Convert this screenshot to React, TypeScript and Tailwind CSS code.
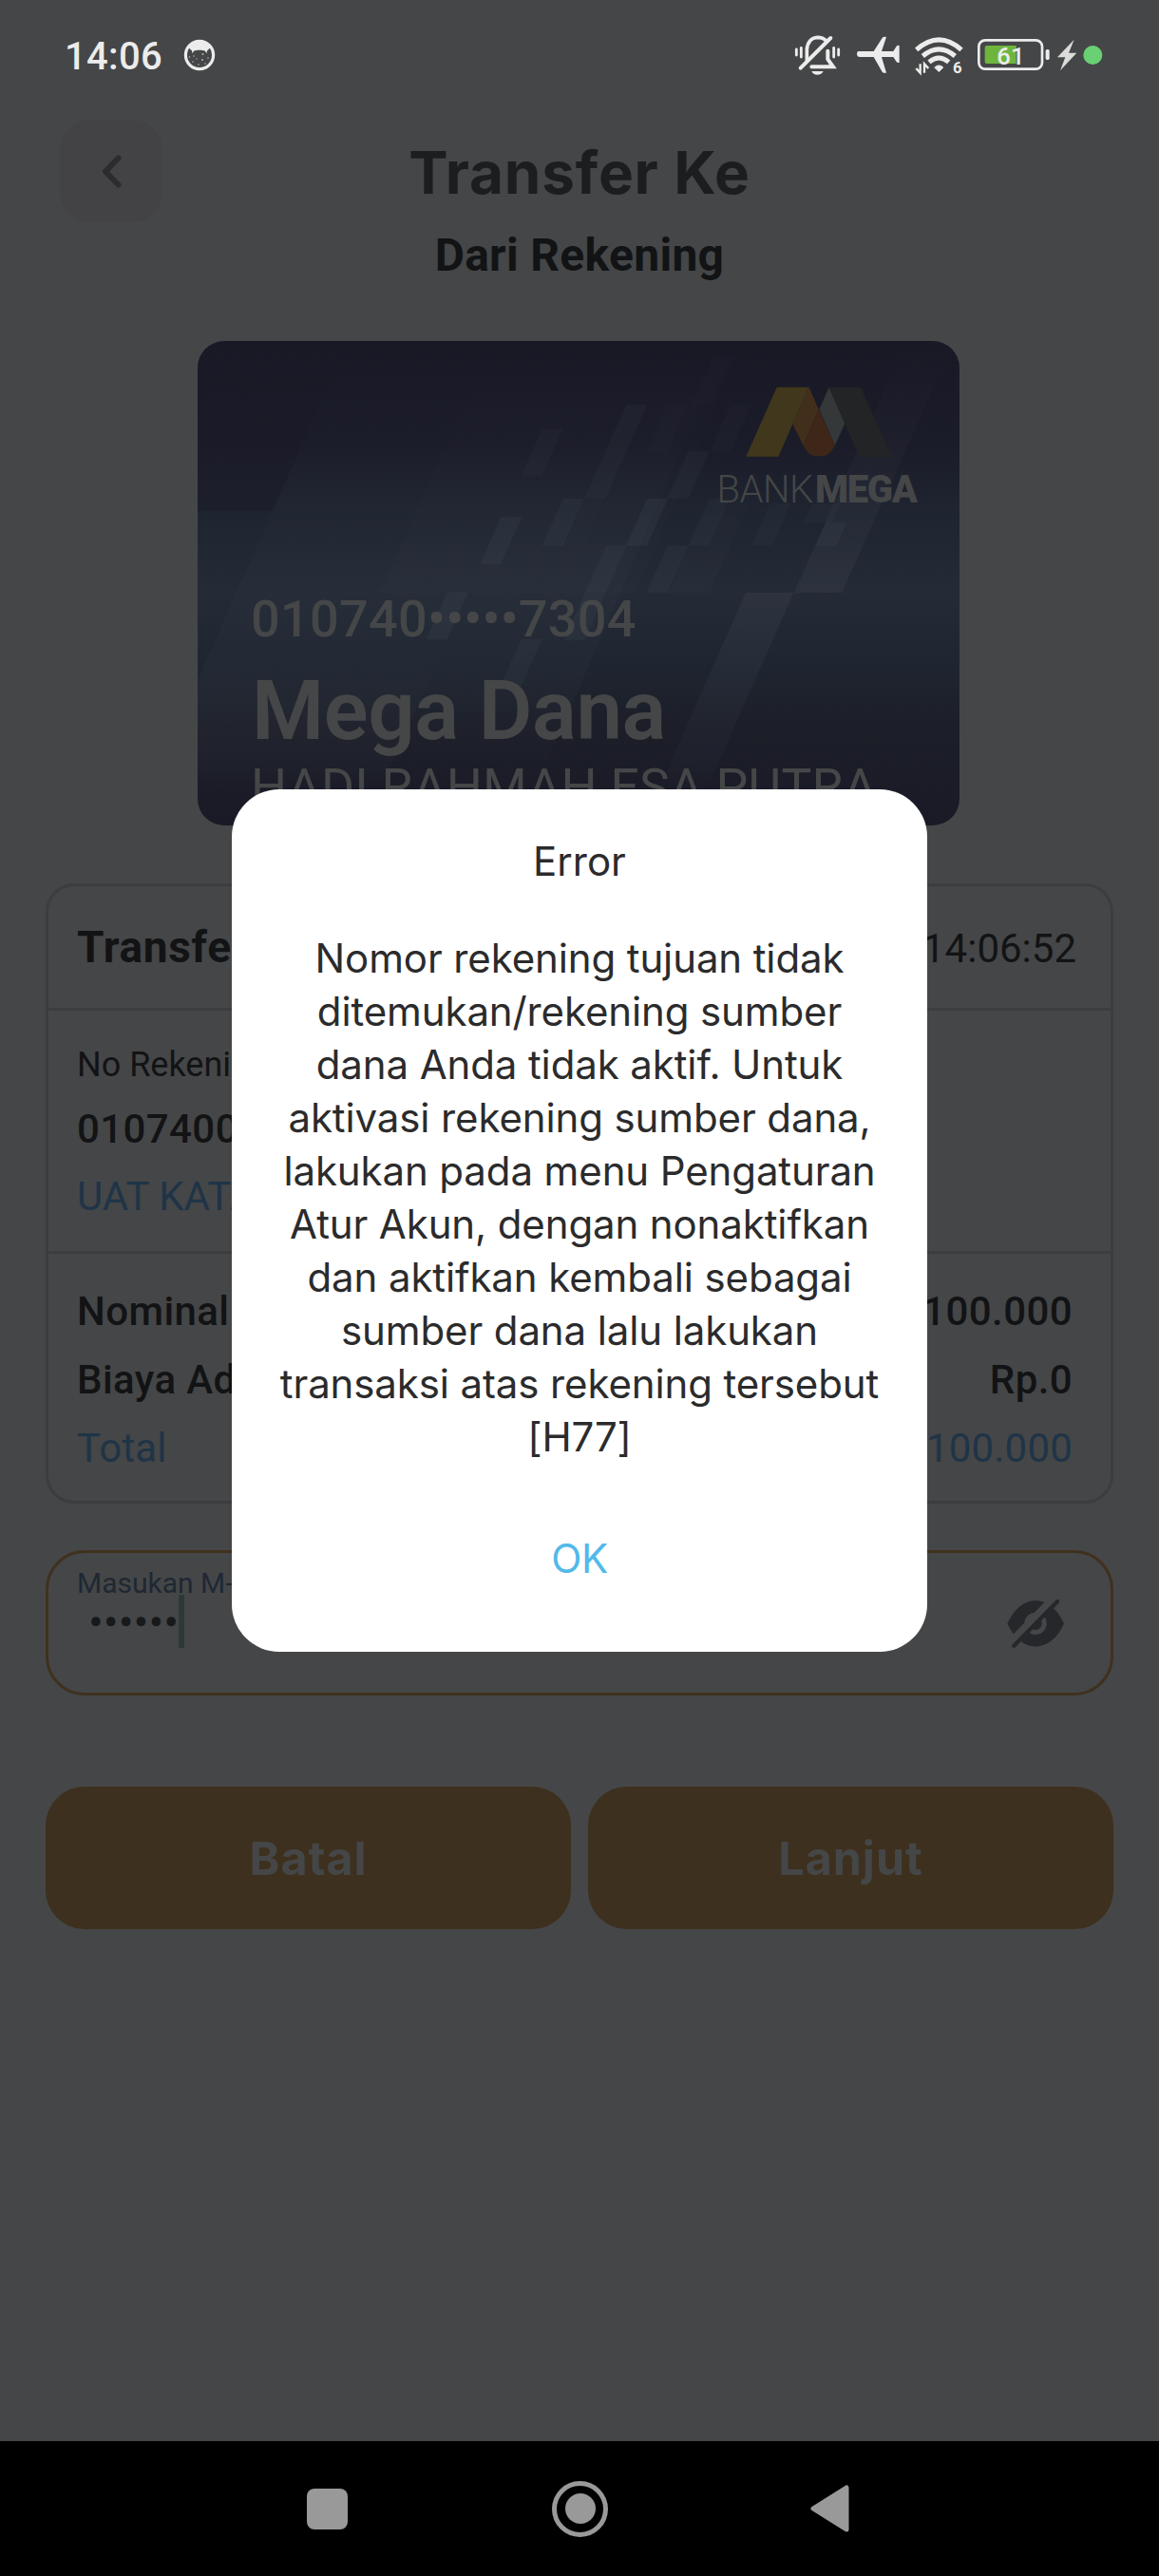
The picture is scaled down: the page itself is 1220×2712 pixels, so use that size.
import type { ReactNode } from 'react';

const messageLines = [
  'Nomor rekening tujuan tidak',
  'ditemukan/rekening sumber',
  'dana Anda tidak aktif. Untuk',
  'aktivasi rekening sumber dana,',
  'lakukan pada menu Pengaturan',
  'Atur Akun, dengan nonaktifkan',
  'dan aktifkan kembali sebagai',
  'sumber dana lalu lakukan',
  'transaksi atas rekening tersebut',
  '[H77]',
];

function StatusBar() {
  return (
    <div className="flex h-[126px] shrink-0 items-start justify-between pl-[68px] pr-[55px] text-[#ececec]">
      <div className="flex h-[118px] items-center">
        <span className="pt-[2px] font-[Roboto] text-[40px] leading-[48px] font-medium tracking-[0.3px]">14:06</span>
        <svg className="ml-[22px] mb-[3px] h-[34px] w-[34px]" viewBox="0 0 34 34">
          <circle cx="17" cy="17" r="14.6" fill="none" stroke="currentColor" strokeWidth="3.200" />
          <path
            d="M5 9C8 5 12 3 17 3s9 2 12 6l-2 1.500-2 2-.6 2.800-1.600-2.800c-3-1-8.600-1-11.600 0L9.600 15.300 9 12.500 7 10.500z"
            fill="currentColor"
          />
          <g fill="currentColor" opacity="0.65">
            <circle cx="6.500" cy="19" r=".8" />
            <circle cx="11" cy="18" r=".8" />
            <circle cx="20.500" cy="16" r="1" />
            <circle cx="14" cy="21" r=".7" />
            <circle cx="20" cy="22" r="1" />
            <circle cx="26" cy="20" r=".8" />
            <circle cx="10" cy="24" r=".8" />
            <circle cx="16" cy="27" r=".8" />
            <circle cx="23" cy="26" r=".8" />
          </g>
        </svg>
      </div>
      <div className="flex items-start pt-[35px]">
        <svg className="h-[45px] w-[60px]" viewBox="105 105 180 135" fill="none" stroke="currentColor" strokeLinecap="round">
          <path d="M148 190V156C150 134 162 119 181 118C194 118 203 122 209 129" strokeWidth="11" />
          <path d="M128 215L223 120" strokeWidth="12" />
          <path d="M214 161V187L231 211H163" strokeWidth="12" />
          <path d="M163 225H200C196 233 190 236 181 236S167 233 163 225Z" fill="currentColor" stroke="none" />
          <path d="M115 156v18M130 151v29M233 151v29M248 156v18" strokeWidth="8.500" />
        </svg>
        <svg className="h-[45px] w-[60px]" viewBox="285 105 180 135" fill="currentColor">
          <path d="M310 162H359L386 120Q389 115 399 117L384 162H421L431 146Q434 142 440 144V197Q434 199 431 195L421 180H384L399 230Q390 232 386 227L359 180H315Q306 178 306 170Q307 163 310 162Z" />
        </svg>
        <svg className="h-[45px] w-[68.33px]" viewBox="465 105 205 135" fill="none" stroke="currentColor">
          <path d="M494 157Q565 94 636 157" strokeWidth="15" />
          <path d="M514 177Q565 134 616 177" strokeWidth="15" />
          <path d="M534 196Q565 170 596 196" strokeWidth="15" />
          <path d="M551 213Q565 200 579 213L565 227Z" fill="currentColor" stroke="currentColor" strokeWidth="2" />
          <path d="M506 202v28l-13-14M519 230v-28l13 14" strokeWidth="7" />
          <text x="609" y="231" fill="currentColor" stroke="none" className="font-[Roboto] text-[50px] font-bold">6</text>
        </svg>
        <svg className="h-[45px] w-[85px]" viewBox="670 105 255 135">
          <rect x="692" y="127" width="200" height="91" rx="20" fill="none" stroke="currentColor" strokeWidth="8" />
          <path d="M718 144H810V201H718Q711 201 711 194V151Q711 144 718 144Z" fill="#6fb53d" />
          <rect x="903" y="156" width="12" height="33" rx="5" fill="currentColor" />
          <text x="749" y="205" fill="currentColor" className="font-[Roboto] text-[77px] font-medium">61</text>
        </svg>
        <svg className="h-[45px] w-[28.33px]" viewBox="925 105 85 135" fill="#dcdcdc">
          <path d="M993 125L940 181H965L949 223L1001 167H976Z" />
        </svg>
        <svg className="h-[45px] w-[28.33px]" viewBox="1010 105 85 135">
          <circle cx="1050" cy="174" r="30" fill="#69d074" />
        </svg>
      </div>
    </div>
  );
}

/* Slanted cells of the card background: x and y of the top left corner, width, height, opacity. */
const cells: [number, number, number, number, number][] = [
  [-88, 294, 66, 144, 0.018],
  [-22, 508, 66, 144, 0.03],
  [-218, 564, 66, 144, 0.035],
  [-388, 795, 66, 144, 0.035],
  [-154, 938, 66, 144, 0.03],
  [178, 220, 66, 288, 0.022],
  [308, 220, 66, 144, 0.012],
  [450, 76, 66, 144, 0.01],
  [507, 220, 66, 144, 0.016],
  [374, 364, 66, 144, 0.028],
  [243, 508, 66, 144, 0.038],
  [439, 508, 66, 144, 0.025],
  [45, 508, 66, 144, 0.008],
  [113, 652, 66, 288, 0.03],
  [308, 652, 66, 144, 0.035],
  [632, 522, 66, 130, 0.022],
  [765, 522, 90, 60, 0.018],
  [808, 581, 66, 72, 0.03],
];

function cellPoints(x: number, y: number, w: number, h: number) {
  const shift = h * 0.46;
  return `${x},${y} ${x + w},${y} ${x + w - shift},${y + h} ${x - shift},${y + h}`;
}

function CardArt() {
  return (
    <svg className="absolute inset-0 h-[510px] w-[803px]" viewBox="0 0 803 510">
      <defs>
        <linearGradient id="base" x1="0" y1="0" x2="0" y2="1">
          <stop offset="0" stopColor="#191926" />
          <stop offset="0.220" stopColor="#1b1c29" />
          <stop offset="0.350" stopColor="#1e2430" />
          <stop offset="0.520" stopColor="#242a36" />
          <stop offset="0.660" stopColor="#1f2631" />
          <stop offset="0.800" stopColor="#1c1e28" />
          <stop offset="1" stopColor="#191a26" />
        </linearGradient>
        <linearGradient id="left" x1="0" y1="0" x2="0" y2="1">
          <stop offset="0" stopColor="#fff" stopOpacity="0" />
          <stop offset="0.500" stopColor="#e0f0ff" stopOpacity="0.014" />
          <stop offset="0.800" stopColor="#c0e0ff" stopOpacity="0.018" />
          <stop offset="1" stopColor="#c0e0ff" stopOpacity="0" />
        </linearGradient>
        <linearGradient id="beam" x1="0" y1="0" x2="0" y2="1">
          <stop offset="0" stopColor="#fff" stopOpacity="0" />
          <stop offset="1" stopColor="#fff" stopOpacity="0.04" />
        </linearGradient>
        <linearGradient id="shade" x1="0" y1="0" x2="0" y2="1">
          <stop offset="0" stopColor="#1b1925" stopOpacity="0" />
          <stop offset="1" stopColor="#1b1b29" stopOpacity="0.600" />
        </linearGradient>
        <linearGradient id="beamDown" x1="0" y1="0" x2="0" y2="1">
          <stop offset="0" stopColor="#fff" stopOpacity="0.04" />
          <stop offset="0.850" stopColor="#a0d0ff" stopOpacity="0.025" />
          <stop offset="1" stopColor="#a0d0ff" stopOpacity="0" />
        </linearGradient>
      </defs>
      <rect width="803" height="510" fill="url(#base)" />
      <g transform="translate(392 -9) scale(.33333 .34436)">
        <path d="M-1180 26H-700L-940 546H-1180Z" fill="url(#shade)" />
        <path d="M-700 26H500L-110 1400H-1180V1070Z" fill="url(#left)" />
        <path d="M-250 26H550L208 796H-600Z" fill="url(#beam)" opacity="0.250" />
        <path d="M-388 940L-600 1400H-1180V940Z" fill="url(#left)" />
        <path d="M1060 26H1215L858 796H708Z" fill="url(#beam)" />
        <path d="M555 796H706L430 1400H278Z" fill="url(#beamDown)" />
        <path d="M560 380H630L440 796H310L400 600Z" fill="url(#beam)" opacity="0.400" />
        {cells.map(([x, y, w, h, opacity]) => (
          <polygon key={`${x}-${y}`} points={cellPoints(x, y, w, h)} fill="#e8f4ff" opacity={opacity} />
        ))}
        <path d="M653 168H755L703 280L658 380H556Z" fill="#40371c" />
        <path d="M755 168L703 280L737 345L785 235Z" fill="#422f1b" />
        <path d="M785 235L837 345C825 368 813 378 795 378H777C758 378 746 365 737 345Z" fill="#3e2619" />
        <path d="M818 168L787 235L837 345L868 278Z" fill="#353839" />
        <path d="M818 168H918L1016 382H915L868 278Z" fill="#222425" />
      </g>
      <text x="546.5" y="170.400" fill="#454647" className="font-[Roboto] text-[40px] font-light tracking-[-0.5px]">BANK</text>
      <text x="650" y="170.400" fill="#454647" className="font-[Roboto] text-[40px] font-black tracking-[-1.3px]">MEGA</text>
    </svg>
  );
}

function AccountCard() {
  return (
    <div className="relative mt-[62px] ml-[208px] h-[510px] w-[802px] shrink-0 overflow-hidden rounded-[28px] font-[Roboto] text-[#454647]">
      <CardArt />
      <div className="relative flex flex-col pt-[261px] pl-[56px] whitespace-nowrap">
        <div className="text-[54px] leading-[64px] font-medium tracking-[0.3px]">010740•••••7304</div>
        <div className="mt-4 pl-px text-[87px] leading-[96px] font-semibold tracking-[-0.4px]">Mega Dana</div>
        <div className="mt-[3px] text-[53.5px] leading-[60px] tracking-[0.2px]">HADI RAHMAH ESA PUTRA</div>
      </div>
    </div>
  );
}

function AmountRow({ label, value, className }: { label: string; value: string; className: string }) {
  return (
    <div className={`flex justify-between ${className}`}>
      <span>{label}</span>
      <span>{value}</span>
    </div>
  );
}

function Details() {
  return (
    <div className="mx-12 mt-[61px] h-[653px] shrink-0 rounded-[30px] border-[3px] border-[#3c3d3f] font-[Roboto] text-[42px] text-[#121315]">
      <div className="flex h-[131px] items-center justify-between border-b-[3px] border-[#3c3d3f] pr-[36px] pl-[30px]">
        <span className="text-[46px] leading-[56px] font-bold tracking-[0.7px]">Transfer</span>
        <span className="pt-[2px]">14:06:52</span>
      </div>
      <div className="flex h-[256px] flex-col border-b-[3px] border-[#3c3d3f] pt-6 pl-[30px]">
        <span className="text-[36px] leading-[66px]">No Rekening</span>
        <span className="leading-[70px] font-medium tracking-[0.4px]">0107400</span>
        <span className="leading-[72px] text-[#1f3447]">UAT KATA</span>
      </div>
      <div className="flex flex-col pt-[25px] pr-[40px] pl-[30px] leading-[72px]">
        <AmountRow label="Nominal" value="Rp.100.000" className="font-medium tracking-[0.4px]" />
        <AmountRow label="Biaya Admin" value="Rp.0" className="font-medium tracking-[0.4px]" />
        <AmountRow label="Total" value="Rp.100.000" className="tracking-[0.2px] text-[#1f3447]" />
      </div>
    </div>
  );
}

function PinField() {
  return (
    <div className="mx-12 mt-[49px] flex h-[153px] shrink-0 items-center justify-between rounded-[41px] border-[3px] border-[#3f311e] pr-[49px] pl-[29px] font-[Roboto]">
      <div className="flex h-full flex-col pt-[14px]">
        <span className="pl-px text-[30px] leading-9 text-[#1f2833]">Masukan M-PIN</span>
        <div className="-mt-[6px] ml-[13px] flex h-[56px]">
          <span className="w-[95px] pt-px text-[47px] leading-[56px] text-[#18191b]">••••••</span>
          <span className="w-[6px] bg-[#2d3939]" />
        </div>
      </div>
      <svg className="h-[54px] w-[60px]" viewBox="59 36 182 160">
        <path d="M60 117C82 70 112 43 150 43S220 70 241 117C220 164 188 190 150 190S82 164 60 117Z" fill="#26272b" />
        <circle cx="150" cy="117" r="28" fill="none" stroke="#454647" strokeWidth="15" />
        <path d="M73 176L212 34" stroke="#454647" strokeWidth="27" />
        <path d="M81 188L220 46" stroke="#26272b" strokeWidth="13" strokeLinecap="round" />
      </svg>
    </div>
  );
}

function ActionButton({ children }: { children: ReactNode }) {
  return (
    <button className="flex-1 rounded-[41px] bg-[#3d301e] pt-[2px] text-center font-[Inter] text-[48.5px] font-bold tracking-[0.9px] text-[#454647]">
      {children}
    </button>
  );
}

function ErrorDialog() {
  return (
    <div className="absolute inset-0 flex items-center justify-center">
      <div className="flex h-[908px] w-[732px] flex-col items-center rounded-[50px] bg-white pt-12 font-[Inter] text-[42px] leading-[56px] whitespace-nowrap text-[#2b2b2c]">
        <h2>Error</h2>
        <div className="mt-[46px] text-center tracking-[-0.12px]">
          {messageLines.map((line) => (
            <p key={line}>{line}</p>
          ))}
        </div>
        <button className="mt-[72px] tracking-[-0.5px] text-[#53b9ea]">OK</button>
      </div>
    </div>
  );
}

function NavigationBar() {
  return (
    <div className="flex h-[142px] items-center bg-black text-[#999999]">
      <span className="ml-[323px] h-[43px] w-[43px] rounded-[8px] bg-[#999999]" />
      <span className="ml-[215px] flex h-[59px] w-[59px] items-center justify-center rounded-full border-[5px] border-[#999999]">
        <span className="h-8 w-8 rounded-full bg-[#999999]" />
      </span>
      <svg className="ml-[213px] h-[50px] w-[41px]" viewBox="0 0 41 50" fill="currentColor" stroke="currentColor">
        <path d="M3 25L38 3V47Z" strokeWidth="5" strokeLinejoin="round" />
      </svg>
    </div>
  );
}

export default function App() {
  return (
    <div className="h-[2712px] w-[1220px] overflow-hidden bg-black">
      <div className="relative flex h-[2570px] flex-col bg-[#454647]">
        <StatusBar />
        <header className="flex h-[108px] shrink-0 items-center justify-between px-[63px]">
          <button className="flex h-[108px] w-[108px] items-center justify-center rounded-[32px] bg-[#434345]">
            <svg className="h-[35px] w-[21px]" viewBox="0 0 21 35" fill="none" stroke="#2b2c2e">
              <path d="M17.500 3.500L4 17.500L17.500 31.500" strokeWidth="6" strokeLinecap="round" strokeLinejoin="round" />
            </svg>
          </button>
          <h1 className="pt-[3px] font-[Inter] text-[62px] font-bold tracking-[0.8px] text-[#1c1d1f]">Transfer Ke</h1>
          <span className="w-[108px]" />
        </header>
        <h2 className="mt-[7px] text-center font-[Roboto] text-[48px] leading-[56px] font-bold tracking-[0.3px] text-[#121315]">
          Dari Rekening
        </h2>
        <AccountCard />
        <Details />
        <PinField />
        <div className="mx-12 mt-24 flex h-[150px] shrink-0 gap-[18px]">
          <ActionButton>Batal</ActionButton>
          <ActionButton>Lanjut</ActionButton>
        </div>
        <ErrorDialog />
      </div>
      <NavigationBar />
    </div>
  );
}
